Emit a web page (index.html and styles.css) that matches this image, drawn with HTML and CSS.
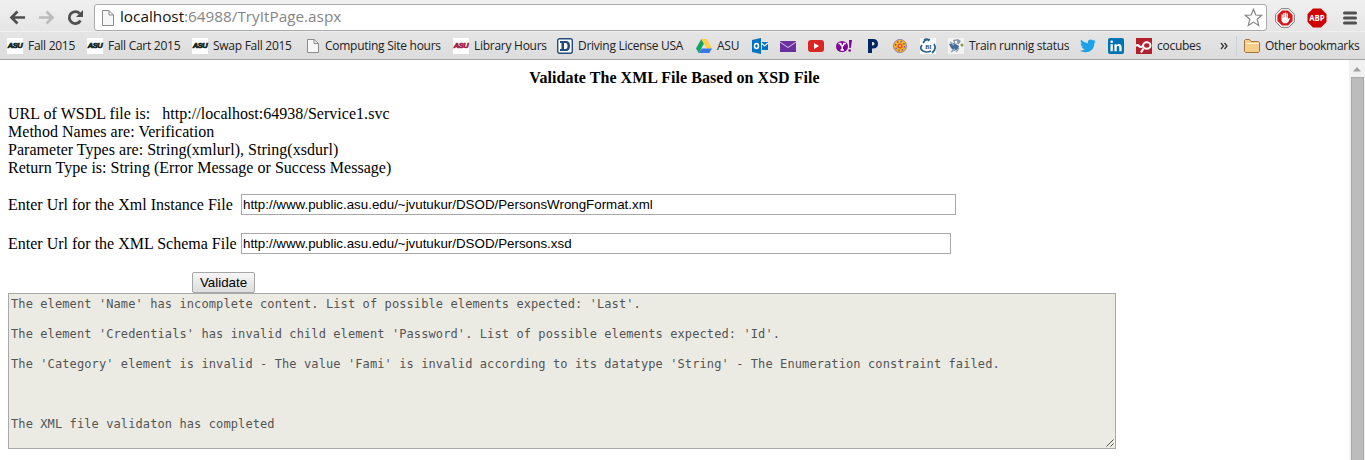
FILE: index.html
```html
<!DOCTYPE html>
<html lang="en">
<head>
<meta charset="utf-8">
<title>TryItPage</title>
<link rel="stylesheet" href="styles.css">
</head>
<body>
<header class="chrome">
  <div class="toolbar">
    <svg class="nav" width="84" height="35" viewBox="0 0 84 35" fill="none">
      <path d="M25 17.5H12M17.5 11.5l-6 6 6 6" stroke="#505050" stroke-width="2.7"/>
      <path d="M39 17.5H52M46.500 11.500l6 6-6 6" stroke="#bcbcbc" stroke-width="2.700"/>
      <path d="M80.500 20.500a6 6 0 1 1-.8-7" stroke="#505050" stroke-width="2.800"/>
      <path d="M83 10v7h-7z" fill="#505050"/>
    </svg>
    <div class="omnibox">
      <svg class="page-icon" width="12" height="16" viewBox="0 0 12 16"><path d="M.5.5h6.500l4.500 4.500v10.500H.5z" fill="#f7f7f7" stroke="#8c8c8c"/><path d="M7 .5V5h4.500" fill="none" stroke="#8c8c8c"/></svg>
      <div class="address">localhost<span>:64988/TryItPage.aspx</span></div>
      <svg width="19" height="19" viewBox="0 0 19 19"><path d="M9.500 1.200l2.300 5.800 6 .3-4.600 4 1.500 6.100-5.200-3.300-5.200 3.300 1.500-6.100-4.600-4 6-.3z" fill="#fff" stroke="#858585" stroke-width="1.200"/></svg>
    </div>
    <svg width="20" height="20" viewBox="0 0 20 20"><path d="M6.200.7h7.600l5.500 5.500v7.600l-5.500 5.500H6.200L.7 13.800V6.200z" fill="#fff" stroke="#777"/><path d="M6.900 2.400h6.200l4.500 4.500v6.200l-4.500 4.500H6.900l-4.500-4.500V6.900z" fill="#d5161b"/><path d="M6.500 11V6.500h1.300V10h.4V5h1.300v4.500h.4V4.500h1.300v5h.4V5.600h1.300v5.600l1.300-1.500 1 .6-2 3.700-1.500 1.300H8.400L6.500 13z" fill="#fff"/></svg>
    <svg class="abp" width="20" height="20" viewBox="0 0 20 20"><path d="M6 .5h8L19.500 6v8L14 19.500H6L.5 14V6z" fill="#d00000"/><text x="10" y="13.300" text-anchor="middle" textLength="15.500" lengthAdjust="spacingAndGlyphs" class="abp-text">ABP</text></svg>
    <svg class="menu" width="14" height="14" viewBox="0 0 14 14"><path d="M1.500 2h11M1.500 7h11M1.500 12h11" stroke="#505050" stroke-width="3" stroke-linecap="round"/></svg>
  </div>
  <nav class="bookmarks">
    <a class="bm w68"><i class="asu">ASU</i><span>Fall 2015</span></a>
    <a class="bm w93"><i class="asu">ASU</i><span>Fall Cart 2015</span></a>
    <a class="bm w100"><i class="asu">ASU</i><span>Swap Fall 2015</span></a>
    <a class="bm w137 file"><svg width="12" height="14" viewBox="0 0 12 14"><path d="M.5.5h6.500l4.500 4v9H.5z" fill="#f7f7f7" stroke="#8c8c8c"/><path d="M7 .5v4h4.500" fill="none" stroke="#8c8c8c"/></svg><span>Computing Site hours</span></a>
    <a class="bm w92"><i class="asu maroon">ASU</i><span>Library Hours</span></a>
    <a class="bm w127"><svg width="16" height="16" viewBox="0 0 16 16"><rect x=".7" y=".7" width="14.600" height="14.600" rx="2" fill="#fff" stroke="#244b7c" stroke-width="1.400"/><path d="M3 3h6q4 0 4 5t-4 5H3v-2h1.500V5H3zM7 5v6h1.500q2 0 2-3t-2-3z" fill="#244b7c" fill-rule="evenodd"/></svg><span>Driving License USA</span></a>
    <a class="bm w44"><svg width="16" height="16" viewBox="0 0 16 16"><path d="M5.300 1L8 5.600 2.700 15 0 10.500z" fill="#11a763"/><path d="M5.300 1h5.400L16 10.500h-5.300z" fill="#ffcf48"/><path d="M5.500 10.500H16L13.300 15H2.700z" fill="#3879e8"/></svg><span>ASU</span></a>
    <a class="bm"><svg width="16" height="16" viewBox="0 0 16 16"><path d="M0 2l9-2v16l-9-2z" fill="#0072c6"/><ellipse cx="4.500" cy="8" rx="2" ry="2.500" fill="none" stroke="#fff" stroke-width="1.500"/><path d="M10 4h6v8h-6z" fill="#0072c6"/><path d="M10 5.500l2.500 2.500L16 5" fill="none" stroke="#fff" stroke-width="1.200"/></svg></a>
    <a class="bm"><svg width="16" height="16" viewBox="0 0 16 16"><path d="M0 3h16v11H0z" fill="#6b2fa0"/><path d="M0 4l8 5.500L16 4" fill="none" stroke="#dbc8eb" stroke-width="1"/></svg></a>
    <a class="bm"><svg width="16" height="16" viewBox="0 0 16 16"><rect y="2" width="16" height="12" rx="3" fill="#d92624"/><path d="M6 5v6l5-3z" fill="#fff"/></svg></a>
    <a class="bm"><svg width="16" height="16" viewBox="0 0 16 16"><ellipse cx="6" cy="8.500" rx="6" ry="5.500" fill="#7b0099"/><path d="M2.500 5.500h3M7 5.500h3M4 5.500l2.200 3 2.300-3M6.200 8.500V12M4.500 12h3.500" stroke="#fff" stroke-width="1.400" fill="none"/><path d="M13 2h3l-1.200 8h-1.500z" fill="#7b0099"/><circle cx="13.700" cy="12.500" r="1.300" fill="#7b0099"/></svg></a>
    <a class="bm"><svg width="16" height="16" viewBox="0 0 16 16"><path d="M4 1h5q5 0 5 4.700T9 10.500H8V15H4zM8 4v3.500h1q1.500 0 1.500-1.800T9 4z" fill="#002663" fill-rule="evenodd"/></svg></a>
    <a class="bm"><svg width="16" height="16" viewBox="0 0 16 16"><circle cx="8" cy="8" r="6.600" fill="#f6a81f" stroke="#9d88ac"/><path d="M8 2v12M2 8h12M4 4l8 8M12 4l-8 8" stroke="#f9c52b" stroke-width="1.500"/><circle cx="8" cy="8" r="4.500" fill="none" stroke="#7d55a0" stroke-width="1.500" stroke-dasharray="1.500 2"/><circle cx="8" cy="8" r="2.600" fill="#e94b2b"/><circle cx="8" cy="8" r="1" fill="#ffe03b"/></svg></a>
    <a class="bm"><svg width="16" height="16" viewBox="0 0 16 16"><path d="M0 0h16v16H0z" fill="#fff"/><path d="M3 5q3-5 7-3M4 2q3-2 5 1M2 7q-3 4 1 6 4 2 8 0M14 6q3 5-2 9" fill="none" stroke="#23628d" stroke-width="1.700"/><text x="8.500" y="10.500" text-anchor="middle" class="bi-text">BI</text></svg></a>
    <a class="bm w120"><svg width="16" height="16" viewBox="0 0 16 16"><path d="M0 0h16v16H0z" fill="#f3f3f1"/><path d="M5 2l5-1 3 2-2 3-5-1z" fill="#8797a8"/><path d="M1 6l5-1 5 3-1 3-4 2-3-3z" fill="#456b9d"/><path d="M3 14l4-3M8 14l3-4M2 4l4 3" stroke="#9bacbb" stroke-width="1.600"/><circle cx="14" cy="7" r="1.500" fill="#8c953e"/><circle cx="8" cy="4" r="1.200" fill="#fff"/></svg><span>Train runnig status</span></a>
    <a class="bm"><svg width="16" height="16" viewBox="0 0 16 16"><path d="M16 3.500l-1.700 1.700C14.500 11 9.500 15.500 3.500 14 2 13.800 1 13.200 0 12.700q3 .1 4.700-1.400-2.300-.3-3-2.300h1.400Q.7 8 .6 5.600l1.400.4Q-.1 4 1.100 1.800 3.800 5 7.900 5.200C7.200 2 10.700.1 13.100 2.600l2.100-.8-1.300 1.900z" fill="#1da1e8"/></svg></a>
    <a class="bm"><svg width="16" height="16" viewBox="0 0 16 16"><rect width="16" height="16" rx="2" fill="#0073b2"/><path d="M2.500 6.200h2.300v7H2.500zM6.400 6.200h2.200v1c1.500-2 5-1.500 5 1.800v4.200h-2.300V9.500c0-2.200-2.600-2-2.600 0v3.700H6.400z" fill="#fff"/><circle cx="3.700" cy="3.800" r="1.300" fill="#fff"/></svg></a>
    <a class="bm w65"><svg width="16" height="16" viewBox="0 0 16 16"><path d="M0 0h16v16H0z" fill="#b3202d"/><path d="M0 8q1.500-2 3 0t4 0M7.500 10.500L5 14.500" fill="none" stroke="#fff" stroke-width="2.200"/><ellipse cx="10.800" cy="7.500" rx="3.700" ry="3.200" fill="none" stroke="#fff" stroke-width="2"/></svg><span>cocubes</span></a>
    <svg class="more" width="8" height="8" viewBox="0 0 8 8"><path d="M1 1l2.500 3L1 7M4.500 1L7 4 4.500 7" fill="none" stroke="#333" stroke-width="1.300"/></svg>
    <div class="divider"></div>
    <a class="bm other"><svg width="16" height="14" viewBox="0 0 16 14"><path d="M.5 12.500v-11l1-1h4l1.500 2h7.500l1 1v9l-1 1h-13z" fill="#f4ce8b" stroke="#a1733d"/><path d="M1.500 4.500h13" stroke="#fff0cd"/></svg><span>Other bookmarks</span></a>
  </nav>
</header>
<div class="viewport">
  <main class="page">
    <h1>Validate The XML File Based on XSD File</h1>
    <div class="info">
      <div>URL of WSDL file is:&nbsp;&nbsp; http://localhost:64938/Service1.svc</div>
      <div>Method Names are: Verification</div>
      <div>Parameter Types are: String(xmlurl), String(xsdurl)</div>
      <div>Return Type is: String (Error Message or Success Message)</div>
    </div>
    <div class="row"><label>Enter Url for the Xml Instance File</label><input class="xml" value="http://www.public.asu.edu/~jvutukur/DSOD/PersonsWrongFormat.xml"></div>
    <div class="row"><label>Enter Url for the XML Schema File</label><input class="xsd" value="http://www.public.asu.edu/~jvutukur/DSOD/Persons.xsd"></div>
    <button class="validate">Validate</button>
    <div class="result">
<pre>The element 'Name' has incomplete content. List of possible elements expected: 'Last'.

The element 'Credentials' has invalid child element 'Password'. List of possible elements expected: 'Id'.

The 'Category' element is invalid - The value 'Fami' is invalid according to its datatype 'String' - The Enumeration constraint failed.



The XML file validaton has completed</pre>
      <svg width="8" height="8" viewBox="0 0 8 8"><path d="M.5 7.500l7-7M4.500 7.500l3-3" stroke="#555"/></svg>
    </div>
  </main>
  <div class="scrollbar">
    <svg width="8" height="5" viewBox="0 0 8 5"><path d="M0 4.500L4 0l4 4.500z" fill="#a0a0a0"/></svg>
    <div class="thumb"></div>
  </div>
</div>
</body>
</html>
```
FILE: styles.css
```css
* { box-sizing: border-box; }
body { margin: 0; width: 1365px; height: 460px; overflow: hidden; background: #fff; display: flex; flex-direction: column; }
svg { display: block; flex: none; }
.chrome { height: 60px; flex: none; background: linear-gradient(#f0f0f0, #dcdcdc); border-bottom: 1px solid #a5a5a5; font-family: "Open Sans", "Noto Sans", sans-serif; }
.toolbar { height: 31px; display: flex; align-items: flex-start; }
.toolbar > svg { margin-top: 8px; }
.toolbar > .nav { margin-top: 0; }
.omnibox { width: 1173px; height: 27px; margin: 4px 8px 0 10px; padding: 0 3px 0 7px; display: flex; align-items: center; background: #fff; border: 1px solid #aaa; border-radius: 3px; }
.address { flex: 1; margin-left: 6px; padding-bottom: 2px; font-size: 15.3px; line-height: 23px; color: #111; white-space: nowrap; }
.address span { color: #858585; }
.toolbar > .abp { margin-left: 12px; }
.abp-text { font: bold 9px "Open Sans", sans-serif; fill: #fff; }
.toolbar > .menu { margin: 11px 0 0 16px; }
.bookmarks { height: 28px; display: flex; align-items: center; padding-left: 7px; gap: 12px; font-size: 12px; letter-spacing: -.27px; color: #222; border-top: 1px solid #eee; }
.bm { display: flex; flex: none; align-items: center; gap: 5px; white-space: nowrap; }
.bm span { line-height: 17px; }
.w44 { width: 44px; }
.w65 { width: 65px; }
.w68 { width: 68px; }
.w92 { width: 92px; }
.w93 { width: 93px; }
.w100 { width: 100px; }
.w120 { width: 120px; }
.w127 { width: 127px; }
.w137 { width: 137px; }
.asu { width: 16px; height: 16px; flex: none; display: flex; justify-content: center; background: #fff; font: italic bold 7.5px/15px "Liberation Sans", sans-serif; color: #10241c; letter-spacing: -.4px; -webkit-text-stroke: .7px; }
.maroon { color: #a02044; }
.file { padding-left: 3px; gap: 6px; }
.bi-text { font: bold 6px "Liberation Serif", serif; fill: #174f7c; letter-spacing: 0; }
.more { margin-left: 7px; }
.divider { width: 1px; height: 20px; background: #c8d1dc; margin-left: -4px; }
.other { margin-left: -5px; }
.viewport { flex: 1; min-height: 0; display: flex; }
.page { width: 1349px; padding: 9px 8px 0; font: 16px/18px "Liberation Serif", serif; color: #000; }
h1 { margin: 0 0 18px; font-size: 16px; line-height: 18px; letter-spacing: .05px; text-align: center; }
.info { margin-bottom: 17px; letter-spacing: .03px; }
.row { display: flex; height: 21px; margin-bottom: 18px; }
label { width: 233px; line-height: 21px; white-space: nowrap; }
input { height: 21px; margin: 0; padding: 1px; border: 1px solid #a9a9a9; font: 13.333px "Liberation Sans", sans-serif; color: #000; outline: 0; }
.xml { width: 715px; }
.xsd { width: 710px; }
.validate { display: block; width: 63px; height: 21px; margin: 0 0 0 184px; padding: 0; border: 1px solid #a6a6a6; border-radius: 2px; background: linear-gradient(#f6f6f6, #dddddd); font: 13.333px "Liberation Sans", sans-serif; color: #000; }
.result { width: 1108px; height: 156px; padding: 3px 1px 1px 2px; border: 1px solid #a9a9a9; background: #ebebe4; display: flex; justify-content: space-between; align-items: flex-end; }
pre { align-self: flex-start; margin: 0; font: 12px/15px "DejaVu Sans Mono", monospace; letter-spacing: .1px; color: #545454; }
.scrollbar { width: 16px; background: #f1f1f1; display: flex; flex-direction: column; align-items: center; padding-top: 7px; }
.thumb { width: 13px; flex: 1; margin-top: 5px; background: #bcbcbc; border: 1px solid #a8a8a8; border-bottom: 0; }
```
